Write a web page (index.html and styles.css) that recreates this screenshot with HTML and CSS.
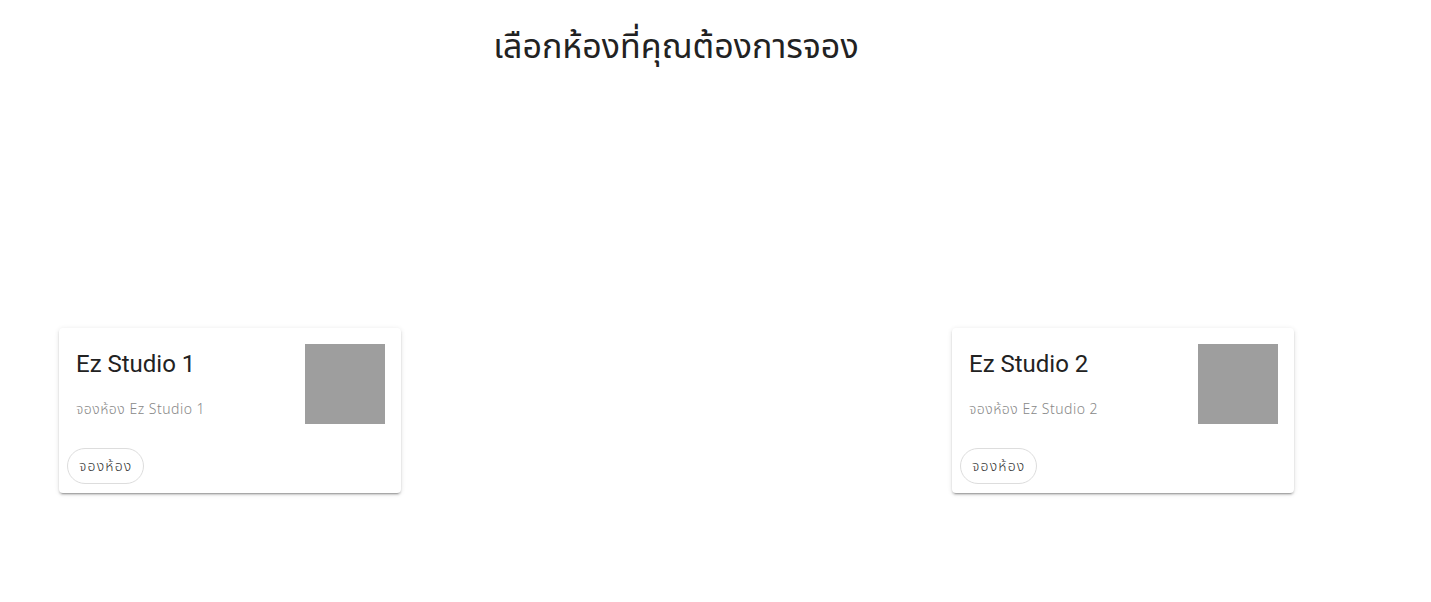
FILE: index.html
```html
<!DOCTYPE html>
<html lang="th">
<head>
<meta charset="utf-8">
<title>เลือกห้อง</title>
<link rel="stylesheet" href="styles.css">
</head>
<body>
<div class="app">
  <h1 class="page-title">เลือกห้องที่คุณต้องการจอง</h1>
  <div class="rooms">
    <div class="card">
      <div class="card-top">
        <div class="card-text">
          <div class="card-title">Ez Studio 1</div>
          <div class="card-sub">จองห้อง Ez Studio 1</div>
        </div>
        <div class="thumb"></div>
      </div>
      <div class="card-actions"><button class="btn">จองห้อง</button></div>
    </div>
    <div class="card">
      <div class="card-top">
        <div class="card-text">
          <div class="card-title">Ez Studio 2</div>
          <div class="card-sub">จองห้อง Ez Studio 2</div>
        </div>
        <div class="thumb"></div>
      </div>
      <div class="card-actions"><button class="btn">จองห้อง</button></div>
    </div>
  </div>
</div>
</body>
</html>
```
FILE: styles.css
```css
html, body { margin: 0; padding: 0; background: #fff; }
body { font-family: Roboto, "Noto Sans Thai", "Noto Sans", sans-serif; color: rgba(0,0,0,0.87); }
.app { width: 1431px; height: 602px; }
.page-title {
  margin: 0;
  padding-top: 25px;
  width: 1352px;
  text-align: center;
  font-weight: 400;
  font-size: 34px;
  line-height: 42px;
  color: #222;
}
.rooms {
  display: grid;
  grid-template-columns: 342px 342px;
  column-gap: 551px;
  padding-left: 59px;
  margin-top: 261px;
}
.card {
  background: #fff;
  border-radius: 4px;
  box-shadow: 0 3px 1px -2px rgba(0,0,0,.2), 0 2px 2px 0 rgba(0,0,0,.14), 0 1px 5px 0 rgba(0,0,0,.12);
  height: 165px;
  box-sizing: border-box;
  display: flex;
  flex-direction: column;
}
.card-top { display: flex; justify-content: space-between; padding: 16px 16px 0 16px; }
.card-text { padding-left: 1px; }
.card-title { font-size: 24px; line-height: 32px; margin-top: 4px; color: #222; }
.card-sub { font-family: "Noto Sans Thai", "Noto Sans", sans-serif; font-weight: 300; font-size: 14px; line-height: 20px; margin-top: 20px; color: #888; letter-spacing: 0.5px; }
.thumb { width: 80px; height: 80px; background: #9e9e9e; }
.card-actions { padding: 24px 8px 8px 8px; }
.btn {
  font-family: "Noto Sans Thai", "Noto Sans", sans-serif;
  font-weight: 300;
  font-size: 14px;
  color: #333;
  background: #fff;
  border: 1px solid #ddd;
  border-radius: 18px;
  height: 36px;
  padding: 0 11px;
  letter-spacing: 1.2px;
}
```
